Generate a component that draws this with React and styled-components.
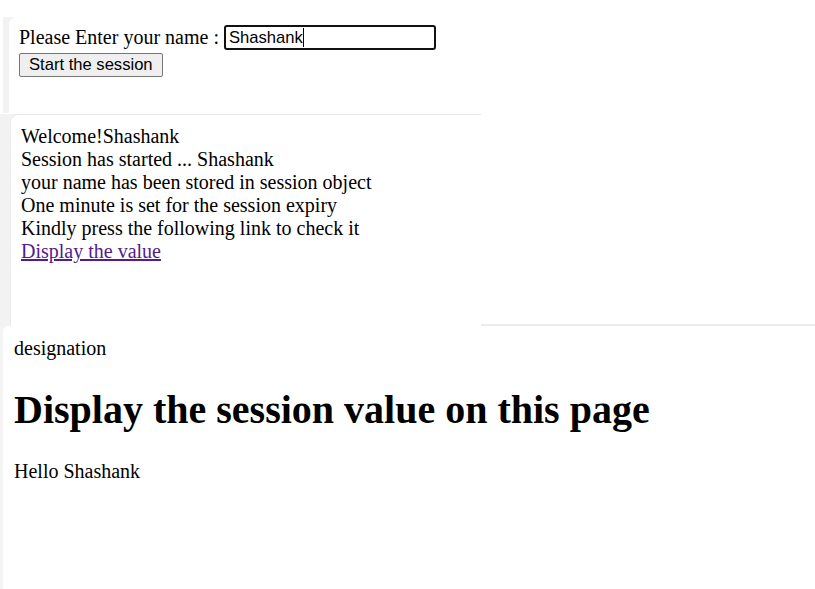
import styled, { createGlobalStyle } from 'styled-components';

const Global = createGlobalStyle`
    html, body {
        margin: 0;
        background: #ffffff;
    }
    body {
        font-family: "Liberation Serif", "Times New Roman", serif;
        font-size: 20px;
        line-height: 23px;
        color: #000;
    }
`

const Page = styled.div`
    width: 815px;
    height: 589px;
    overflow: hidden;
    display: flex;
    flex-direction: column;
    padding-top: 17px;
    box-sizing: border-box;
`

const Shot = styled.div`
    display: flex;
    box-sizing: border-box;
    background: ${p => p.$strip || '#f2f2f2'};
    margin-left: ${p => p.$left || 0}px;
    padding-left: ${p => p.$gap}px;
    width: ${p => p.$width ? p.$width + 'px' : 'auto'};
    height: ${p => p.$height ? p.$height + 'px' : 'auto'};
    flex: ${p => p.$grow ? 1 : 'none'};
`

const Panel = styled.div`
    flex: 1;
    background: #fff;
    border-top-left-radius: ${p => p.$radius || 8}px;
    border-top: ${p => p.$line ? '1px solid #e8e8e8' : 'none'};
    border-left: ${p => p.$line ? '1px solid #ececec' : 'none'};
    padding: ${p => p.$pad};
`

const FormRow = styled.div`
    display: flex;
    align-items: center;
    height: 25px;
    white-space: pre;
`

const TextBox = styled.div`
    width: 212px;
    height: 25px;
    box-sizing: border-box;
    border: 2px solid #111;
    border-radius: 3px;
    padding: 0 3px;
    display: flex;
    align-items: center;
    font-family: "Liberation Sans", Arial, sans-serif;
    font-size: 16.6px;
`

const Caret = styled.span`
    display: inline-block;
    width: 1.5px;
    height: 19px;
    background: #000;
`

const Button = styled.button`
    margin-top: 3px;
    height: 24px;
    padding: 0 9px;
    font-family: "Liberation Sans", Arial, sans-serif;
    font-size: 16.6px;
    color: #000;
    background: #efefef;
    border: 1px solid #767676;
    border-radius: 2px;
`

const Middle = styled.div`
    display: flex;
    align-items: flex-end;
    margin-top: 1px;
`

const Filler = styled.div`
    flex: 1;
    border-bottom: 2px solid #ececec;
`

const Line = styled.div``

const Link = styled.a`
    color: #551a8b;
    text-decoration: underline;
`

const Heading = styled.h1`
    font-size: 40px;
    line-height: 46px;
    font-weight: bold;
    margin: 27px 0;
`

export default function App() {
    return (
        <Page>
            <Global />
            <Shot $left={3} $gap={6} $width={479} $height={96}>
                <Panel $pad="8px 10px">
                    <FormRow>
                        Please Enter your name : <TextBox>Shashank<Caret /></TextBox>
                    </FormRow>
                    <Button>Start the session</Button>
                </Panel>
            </Shot>
            <Middle>
                <Shot $gap={10} $width={481} $height={212}>
                    <Panel $line $pad="10px 10px">
                        <Line>Welcome!Shashank</Line>
                        <Line>Session has started ... Shashank</Line>
                        <Line>your name has been stored in session object</Line>
                        <Line>One minute is set for the session expiry</Line>
                        <Line>Kindly press the following link to check it</Line>
                        <Link href="#">Display the value</Link>
                    </Panel>
                </Shot>
                <Filler />
            </Middle>
            <Shot $gap={3} $strip="#f4f4f4" $grow>
                <Panel $radius={6} $pad="11px 11px">
                    <Line>designation</Line>
                    <Heading>Display the session value on this page</Heading>
                    <Line>Hello Shashank</Line>
                </Panel>
            </Shot>
        </Page>
    );
}
